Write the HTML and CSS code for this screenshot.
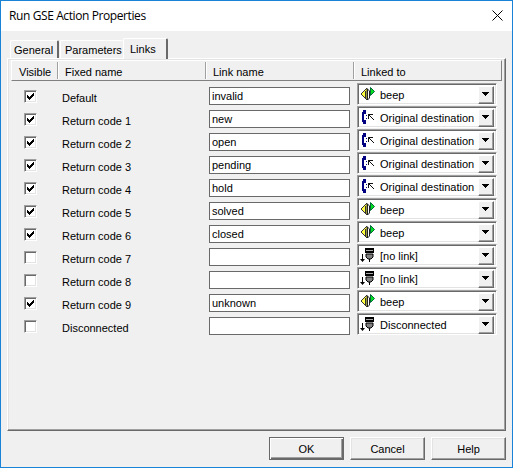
FILE: index.html
```
<!DOCTYPE html>
<html lang="en">
<head>
<meta charset="utf-8">
<title>Run GSE Action Properties</title>
<link rel="stylesheet" href="styles.css">
</head>
<body>
<svg width="0" height="0" class="defs">
  <symbol id="beep" viewBox="0 0 16 16">
    <path d="M1 8L7 2v12z" fill="#ffff40" stroke="#333"/><path d="M5 5h1v7H5z" fill="#333"/>
    <path d="M7.5 3v11l2-2V5z" fill="#fff" stroke="#222"/>
    <path d="M10.5 1.500v8l4-4z" fill="#00e020" stroke="#063"/>
  </symbol>
  <symbol id="dest" viewBox="0 0 16 16">
    <path d="M3 1h3v4H4v6h2v4H3v-2H2V3h1z" fill="#000080"/><path d="M4 6h2v4H4z" fill="#fff"/><path d="M6 6h1v1H6zM6 9h1v1H6z" fill="#000080"/>
    <path d="M8 5h5v1h-3v1h1v1h1v1h1v1h1v1h-1v-1h-1V9h-1V8h-1V7H9v3H8z" fill="#111"/>
  </symbol>
  <symbol id="nolink" viewBox="0 0 16 16">
    <path d="M5 1h9v5H5z" fill="#000"/><path d="M6 3h7v1H6z" fill="#aaa"/>
    <path d="M6 7h7v3l-2 2H8l-2-2z" fill="#808080" stroke="#000"/><path d="M9 12h1v3H9zM2 7h1v5h2l-2.500 3L0 12h2z" fill="#000"/>
  </symbol>
  <symbol id="tick" viewBox="0 0 9 9"><path d="M1 3h1v1h1v1h1V4h1V3h1V2h1V1h1v3H7v1H6v1H5v1H4v1H3V7H2V6H1z"/></symbol>
</svg>
<main class="dialog">
  <header class="title"><span>Run GSE Action Properties</span>
    <svg width="11" height="11" viewBox="0 0 11 11"><path d="M.5.5l10 10M10.500.5l-10 10" stroke="#000" fill="none"/></svg>
  </header>
  <nav class="tabs"><div class="tab general">General</div><div class="tab params">Parameters</div><div class="tab links">Links</div></nav>
  <section class="panel">
    <div class="head"><div>Visible</div><div>Fixed name</div><div>Link name</div><div>Linked to</div></div>
    <div class="rows" id="rows"></div>
  </section>
  <footer class="buttons"><button class="ok"><span>OK</span></button><button><span>Cancel</span></button><button><span>Help</span></button></footer>
</main>
<script src="rows.js"></script>
</body>
</html>
```
FILE: styles.css
```
* { box-sizing: border-box; }
body { margin: 0; background: #f0f0f0; color: #000; font: 11px/14px "Liberation Sans", sans-serif; }
.defs { display: block; position: absolute; }
.dialog { width: 513px; height: 468px; border: 1px solid #1883d7; background: #f0f0f0; display: flex; flex-direction: column; }
.title { height: 30px; background: #fff; display: flex; justify-content: space-between; align-items: center; padding: 0 9px 1px 8px; font: 12px/16px "Open Sans", sans-serif; letter-spacing: -.4px; }
.tabs { height: 27px; display: flex; align-items: flex-end; padding-left: 9px; }
.tab { height: 18px; border: 1px solid #fff; border-right: 2px solid #696969; border-bottom: 0; border-radius: 2px 2px 0 0; padding: 2px 0 0 3px; white-space: nowrap; }
.general { width: 49px; }
.params { width: 63px; margin-left: 1px; padding-left: 4px; border-right: 0; }
.links { width: 45px; height: 21px; padding: 3px 0 0 6px; position: relative; z-index: 1; margin-bottom: -1px; background: #f0f0f0; }
.panel { width: 499px; height: 373px; margin-left: 6px; border: 1px solid #fff; border-right-color: #696969; border-bottom-color: #696969; box-shadow: inset -1px -1px #a0a0a0, inset 1px 1px #e3e3e3; padding: 1px 3px; }
.head { width: 491px; height: 21px; border: 1px solid #fff; border-right-color: #808080; border-bottom-color: #808080; display: grid; grid-template-columns: 46px 148px 148px 1fr; }
.head div { padding: 3px 0 0 7px; border-right: 1px solid #a0a0a0; box-shadow: 1px 0 #fff; margin: 1px 0; }
.head div:last-child { border: 0; box-shadow: none; }
.rows { padding-top: 2px; }
.row { height: 23px; display: grid; grid-template-columns: 51px 147px 148px 140px; }
.check { width: 13px; height: 13px; margin: 7px 0 0 13px; background: #fff; border: 1px solid; border-color: #a0a0a0 #fff #fff #a0a0a0; box-shadow: inset 1px 1px #696969, inset -1px -1px #e3e3e3; padding: 1px; }
.check svg { display: block; width: 9px; height: 9px; }
.name { padding-top: 8px; }
.field { width: 141px; height: 18px; margin-top: 4px; border: 1px solid #696969; background: #fff; padding: 1px 2px; }
.combo { height: 22px; background: #fff; border: 1px solid; border-color: #a0a0a0 #fff #fff #a0a0a0; box-shadow: inset 1px 1px #696969, inset -1px -1px #e3e3e3; padding: 2px; display: flex; }
.combo .icon { width: 16px; height: 16px; flex: none; }
.combo span { flex: 1; white-space: nowrap; padding: 2px 0 0 4px; }
.arrow { width: 16px; height: 18px; background: #f0f0f0; border: 1px solid; border-color: #fff #696969 #696969 #fff; box-shadow: inset -1px -1px #a0a0a0; padding: 5px 0 0 3px; }
.arrow svg { display: block; }
.buttons { display: flex; justify-content: flex-end; gap: 6px; padding: 6px 6px 0 0; }
button { width: 75px; height: 23px; padding: 0; font: inherit; background: #f0f0f0; border: 1px solid; border-color: #fff #696969 #696969 #fff; box-shadow: inset -1px -1px #a0a0a0, inset 1px 1px #e3e3e3; }
.ok { border-color: #696969; box-shadow: inset 1px 1px #fff, inset -1px -1px #696969, inset -2px -2px #a0a0a0; }
```
FILE: rows.js
```
const rows = [
  ["Default", "invalid", "beep", "beep", 1],
  ["Return code 1", "new", "Original destination", "dest", 1],
  ["Return code 2", "open", "Original destination", "dest", 1],
  ["Return code 3", "pending", "Original destination", "dest", 1],
  ["Return code 4", "hold", "Original destination", "dest", 1],
  ["Return code 5", "solved", "beep", "beep", 1],
  ["Return code 6", "closed", "beep", "beep", 1],
  ["Return code 7", "", "[no link]", "nolink", 0],
  ["Return code 8", "", "[no link]", "nolink", 0],
  ["Return code 9", "unknown", "beep", "beep", 1],
  ["Disconnected", "", "Disconnected", "nolink", 0]
];
document.getElementById("rows").innerHTML = rows.map(([name, link, target, icon, on]) => `<div class="row">
<div class="check">${on ? '<svg shape-rendering="crispEdges"><use href="#tick"/></svg>' : ""}</div>
<div class="name">${name}</div><div class="field">${link}</div>
<div class="combo"><svg class="icon"><use href="#${icon}"/></svg><span>${target}</span><div class="arrow"><svg width="7" height="4" shape-rendering="crispEdges"><path d="M0 0h7v1H6v1H5v1H4v1H3V3H2V2H1V1H0z"/></svg></div></div></div>`).join("");
```
